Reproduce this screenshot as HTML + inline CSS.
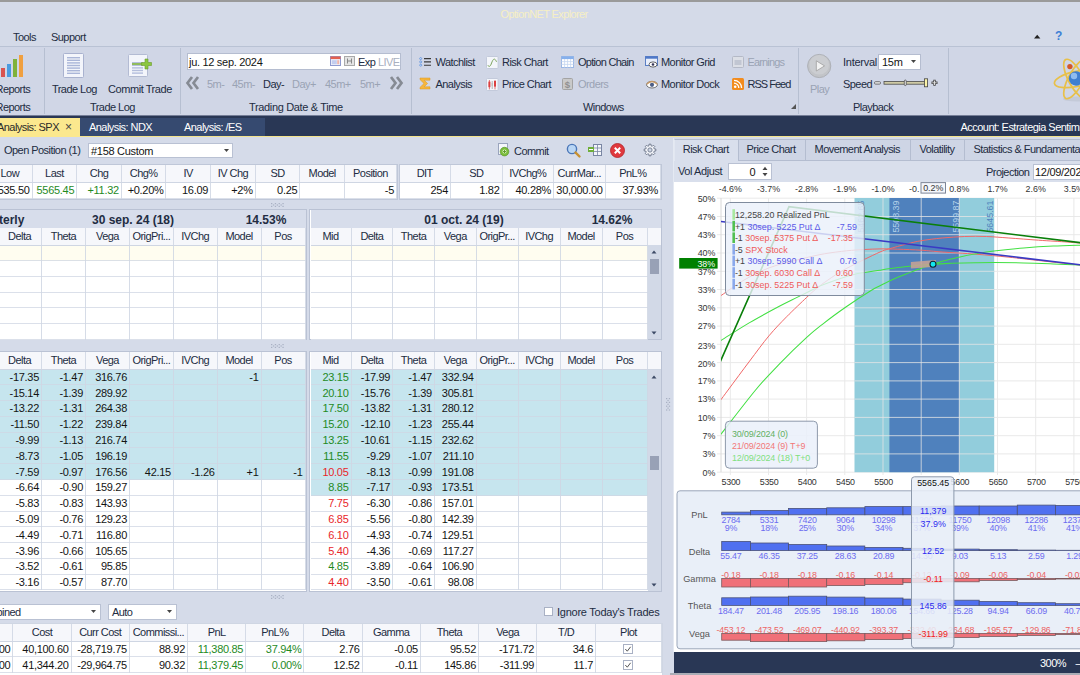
<!DOCTYPE html><html><head><meta charset="utf-8"><title>OptionNET Explorer</title><style>
html,body{margin:0;padding:0;}
body{width:1080px;height:675px;overflow:hidden;position:relative;background:#d5dbe9;
 font-family:"Liberation Sans",sans-serif;font-size:11px;color:#222c42;letter-spacing:-0.55px;}
div{position:absolute;box-sizing:border-box;white-space:nowrap;}
.t{line-height:14px;height:14px;}
.c{line-height:14px;height:14px;text-align:center;}
.r{line-height:14px;height:14px;text-align:right;}
.n{letter-spacing:-0.3px;color:#141414;}
.n.g{color:#1f8a1f;}.n.rd{color:#e8262a;}
.g{color:#1f8a1f;}
.rd{color:#e8262a;}
.dis{color:#9aa3b4;}
svg{position:absolute;overflow:visible;}
.ch{font-family:"Liberation Sans",sans-serif;font-size:9px;letter-spacing:0;}
</style></head><body>
<div style="left:0px;top:0px;width:1080px;height:46px;background:#d4dae8;"></div>
<div style="left:0px;top:46px;width:1080px;height:70px;background:#d0d6e6;"></div>
<div style="left:0px;top:0px;width:1080px;height:2px;background:#9a9a9a;"></div>
<div class="t" style="left:500.5px;top:7.3px;color:#f6efc4;letter-spacing:-.62px;">OptionNET Explorer</div>
<div class="t" style="left:13px;top:30px;">Tools</div>
<div class="t" style="left:51px;top:30px;">Support</div>
<svg style="left:1034px;top:34px" width="7" height="5"><path d="M0 4.5 L3.2 0.8 L6.4 4.5 Z" fill="#222"/></svg>
<div class="t" style="left:1055px;top:29px;color:#3d7fd6;font-weight:bold;font-size:12px;">?</div>
<div style="left:0px;top:46px;width:1080px;height:1px;background:#b9c2d4;"></div>
<div style="left:44px;top:48px;width:1px;height:66px;background:#b6bfd1;"></div>
<div style="left:180px;top:48px;width:1px;height:66px;background:#b6bfd1;"></div>
<div style="left:411px;top:48px;width:1px;height:66px;background:#b6bfd1;"></div>
<div style="left:798.3px;top:48px;width:1px;height:66px;background:#b6bfd1;"></div>
<div style="left:948px;top:48px;width:1px;height:66px;background:#b6bfd1;"></div>
<div class="t" style="left:-4.5px;top:100px;">Reports</div>
<div class="t" style="left:90px;top:100px;">Trade Log</div>
<div class="t" style="left:249px;top:100px;letter-spacing:-.35px;">Trading Date &amp; Time</div>
<div class="t" style="left:583px;top:100px;">Windows</div>
<div class="t" style="left:853px;top:100px;">Playback</div>
<div class="t" style="left:-4.5px;top:82px;">Reports</div>
<svg style="left:0;top:54px" width="26" height="24"><rect x="1" y="14" width="4" height="9" fill="#d9534f"/><rect x="7" y="10" width="4" height="13" fill="#4a9be0"/><rect x="13" y="5" width="4" height="18" fill="#7fb23a"/><rect x="19" y="1" width="4" height="22" fill="#f0a040"/></svg>
<svg style="left:63px;top:53px" width="22" height="26"><rect x="0.5" y="0.5" width="20" height="24" rx="1" fill="#f3f5fb" stroke="#a9b2cf"/><rect x="4" y="4.0" width="13" height="1.4" fill="#aab6d8"/><rect x="4" y="6.6" width="13" height="1.4" fill="#aab6d8"/><rect x="4" y="9.2" width="13" height="1.4" fill="#aab6d8"/><rect x="4" y="11.8" width="13" height="1.4" fill="#aab6d8"/><rect x="4" y="14.4" width="13" height="1.4" fill="#aab6d8"/><rect x="4" y="17.0" width="13" height="1.4" fill="#aab6d8"/><rect x="4" y="19.6" width="13" height="1.4" fill="#aab6d8"/></svg>
<div class="t" style="left:52px;top:82px;">Trade Log</div>
<svg style="left:128px;top:54px" width="26" height="24"><rect x="0.5" y="0.5" width="19" height="22" rx="1" fill="#f3f5fb" stroke="#b3bbd3"/><rect x="4" y="8.0" width="11" height="1.4" fill="#b4bedc"/><rect x="4" y="10.6" width="11" height="1.4" fill="#b4bedc"/><rect x="4" y="13.2" width="11" height="1.4" fill="#b4bedc"/><rect x="4" y="15.8" width="11" height="1.4" fill="#b4bedc"/><rect x="4" y="18.4" width="11" height="1.4" fill="#b4bedc"/><rect x="4" y="9.2" width="10" height="1.6" fill="#7fb23a"/><path d="M13.5 8.5h3.5v-3.5h3v3.5h3.5v3h-3.5v3.5h-3v-3.5h-3.5z" fill="#8cc63f" stroke="#6a9a2a" stroke-width=".6"/></svg>
<div class="t" style="left:108px;top:82px;letter-spacing:-.43px;">Commit Trade</div>
<div style="left:187px;top:53px;width:214px;height:17px;background:#fff;border:1px solid #b5bdd0;"></div>
<div class="t n" style="left:189px;top:54.5px;">ju. 12 sep. 2024</div>
<svg style="left:330px;top:56px" width="11" height="10"><rect x="0.5" y="0.5" width="10" height="9" fill="#eef1fb" stroke="#8f9ad0"/><rect x="0.5" y="0.5" width="10" height="2.6" fill="#e4604f"/><rect x="1.8" y="4.2" width="5" height="4" fill="#c3cdee"/><rect x="7.2" y="4.2" width="2" height="4" fill="#f0b4a8"/></svg>
<svg style="left:344px;top:56px" width="11" height="10"><rect x="0.5" y="0.5" width="10" height="9" fill="#e4e4e4" stroke="#aaa"/><path d="M3.5 2.5v5M7.5 2.5v5M3.5 5h4" stroke="#888" fill="none"/></svg>
<div class="t" style="left:358px;top:54.5px;">Exp</div>
<div class="t" style="left:378px;top:54.5px;color:#a9b0bf;">LIVE</div>
<svg style="left:186px;top:76px" width="14" height="14"><path d="M6 1 L1.5 7 L6 13 M12 1 L7.5 7 L12 13" fill="none" stroke="#868b94" stroke-width="2.7"/></svg>
<svg style="left:389.2px;top:75.6px" width="14" height="14"><path d="M2 1 L6.5 7 L2 13 M8 1 L12.5 7 L8 13" fill="none" stroke="#868b94" stroke-width="2.7"/></svg>
<div class="t dis" style="left:207px;top:76.5px;">5m-</div>
<div class="t dis" style="left:232px;top:76.5px;">45m-</div>
<div class="t" style="left:263px;top:76.5px;">Day-</div>
<div class="t dis" style="left:292px;top:76.5px;">Day+</div>
<div class="t dis" style="left:325px;top:76.5px;">45m+</div>
<div class="t dis" style="left:360px;top:76.5px;">5m+</div>
<div class="t" style="left:435.5px;top:55px;">Watchlist</div>
<div class="t" style="left:435.5px;top:77px;">Analysis</div>
<div class="t" style="left:502px;top:55px;">Risk Chart</div>
<div class="t" style="left:502px;top:77px;">Price Chart</div>
<div class="t" style="left:578px;top:55px;letter-spacing:-.72px;">Option Chain</div>
<div class="t dis" style="left:578px;top:77px;">Orders</div>
<div class="t" style="left:661px;top:55px;">Monitor Grid</div>
<div class="t" style="left:661px;top:77px;">Monitor Dock</div>
<div class="t dis" style="left:747.5px;top:55px;letter-spacing:-.85px;">Earnings</div>
<div class="t" style="left:747.5px;top:77px;letter-spacing:-1px;">RSS Feed</div>
<svg style="left:419px;top:56px" width="13" height="12"><g stroke="#3a3a3a" stroke-width="1.1"><path d="M5 2.6h7M5 5.9h7M5 9.2h7"/></g><g fill="#dbe8fb" stroke="#4a84d8" stroke-width=".7"><circle cx="1.7" cy="2.6" r="1"/><circle cx="1.7" cy="5.9" r="1"/><circle cx="1.7" cy="9.2" r="1"/></g></svg>
<svg style="left:419px;top:77px" width="13" height="13"><path d="M1 1h10v2.2H5.2L8.6 6.5 5.2 9.8H11V12H1v-1.6L5 6.5 1 2.6z" fill="#f6b63c" stroke="#d99420" stroke-width=".5"/></svg>
<svg style="left:486px;top:56px" width="13" height="13"><rect x=".5" y=".5" width="11.6" height="12" rx="1" fill="#f4f6fb" stroke="#c3cadb"/><path d="M1.8 9.2 C3 11.2 4.2 10.6 5.2 8 S7.2 2.6 8.6 3.2 S10 5.4 10.8 6" fill="none" stroke="#7aa35a" stroke-width="1"/></svg>
<svg style="left:486px;top:78px" width="13" height="13"><rect x=".5" y=".5" width="11.6" height="12" rx="1" fill="#f4f6fb" stroke="#c3cadb"/><path d="M3.4 2v9.4M9 2v9.4" stroke="#e05050" stroke-width=".8"/><path d="M6.2 3v8" stroke="#999" stroke-width=".7"/><rect x="2.4" y="3.6" width="2" height="5.6" fill="#dc4040"/><rect x="8" y="3" width="2" height="5.6" fill="#dc4040"/><rect x="5.6" y="5" width="1.2" height="3" fill="#bbb"/></svg>
<svg style="left:561px;top:56px" width="13" height="12"><rect x=".5" y=".5" width="12" height="11" fill="#fff" stroke="#9db8e4"/><rect x=".5" y=".5" width="12" height="2.6" fill="#86b0ec"/><path d="M.5 5.6h12M.5 8.4h12M3.6 3v8.5M6.6 3v8.5M9.6 3v8.5" stroke="#c4d5f0" stroke-width=".8"/></svg>
<svg style="left:562px;top:78px" width="11" height="12"><rect x=".5" y=".5" width="10" height="11" rx="1" fill="#c9c9c9" stroke="#a3a3a3"/><text x="5.5" y="9.6" font-size="9.5" font-weight="bold" text-anchor="middle" fill="#909090" font-family="Liberation Sans, sans-serif" style="letter-spacing:0">$</text></svg>
<svg style="left:645px;top:56px" width="13" height="12"><rect x=".5" y=".5" width="12" height="9" fill="#e8eefb" stroke="#5b7fc4"/><rect x=".5" y=".5" width="12" height="2.2" fill="#4f78c8"/><ellipse cx="8" cy="8.5" rx="4" ry="2.6" fill="#fff" stroke="#444" stroke-width=".8"/><circle cx="8" cy="8.5" r="1.3" fill="#335"/></svg>
<svg style="left:646px;top:80px" width="13" height="9"><ellipse cx="6" cy="4.7" rx="5.5" ry="3.3" fill="#fff" stroke="#666" stroke-width=".9"/><path d="M0.6 4.2 Q6 -1.2 11.4 4.2" fill="none" stroke="#c69a68" stroke-width="1.3"/><circle cx="6" cy="4.8" r="2.1" fill="#4d5f86"/></svg>
<svg style="left:732px;top:56px" width="12" height="12"><rect x=".5" y=".5" width="11" height="11" rx="1" fill="#dcdfe6" stroke="#b4b9c6"/><rect x="2.5" y="4" width="7" height="5" fill="#c1c6d2"/></svg>
<svg style="left:732px;top:78px" width="12" height="12"><rect width="12" height="12" rx="1.5" fill="#f28c1e"/><circle cx="3.2" cy="8.8" r="1.3" fill="#fff"/><path d="M2 5.2a4.8 4.8 0 0 1 4.8 4.8M2 2.4a7.6 7.6 0 0 1 7.6 7.6" fill="none" stroke="#fff" stroke-width="1.3"/></svg>
<svg style="left:791px;top:104px" width="5" height="5"><path d="M5 0V5H0Z" fill="#555"/></svg>
<svg style="left:806.5px;top:54px" width="25" height="25"><circle cx="12.2" cy="12" r="11.6" fill="#c2c4c8" stroke="#aeb1b7"/><circle cx="12.2" cy="10.8" r="9.8" fill="#cbcdd1"/><path d="M9.3 6.8v10.2l8.3-5.1z" fill="#f2f2f2" stroke="#a5a5a5" stroke-width=".9"/></svg>
<div class="t dis" style="left:810px;top:82px;">Play</div>
<div class="t" style="left:843px;top:55px;letter-spacing:-.27px;">Interval</div>
<div style="left:878px;top:54px;width:43px;height:16px;background:#fff;border:1px solid #b5bdd0;"></div>
<div class="t n" style="left:882px;top:55px;">15m</div>
<svg style="left:911px;top:60px" width="6" height="4"><path d="M0 0h5L2.5 3z" fill="#444"/></svg>
<div class="t" style="left:843px;top:76.5px;">Speed</div>
<svg style="left:874px;top:77px" width="66" height="12"><rect x=".5" y="4.7" width="6" height="2.4" rx="1" fill="#e8e8e8" stroke="#555" stroke-width=".8"/><rect x="10" y="4.4" width="42" height="2.8" fill="#cfcba6" stroke="#4a4a4a" stroke-width=".8"/><rect x="30.3" y="3" width="2" height="5.6" rx="1" fill="#ddd" stroke="#4a4a4a" stroke-width=".7"/><rect x="50.4" y="1.8" width="3.2" height="8" fill="#fbf3a8" stroke="#444" stroke-width=".8"/><path d="M57.5 5.8h6M60.5 2.8v6" stroke="#444" stroke-width="2.4"/><path d="M58.3 5.8h4.4M60.5 3.6v4.4" stroke="#e8e8e8" stroke-width=".9"/></svg>
<svg style="left:1050px;top:52px" width="30" height="54" viewBox="1050 52 30 54"><ellipse cx="1077" cy="99" rx="14" ry="2.5" fill="#c4cad8"/><g fill="none" stroke="#e8c04a" stroke-width="1.7"><ellipse cx="1076" cy="79" rx="22" ry="7.5" transform="rotate(-62 1076 79)"/><ellipse cx="1076" cy="79" rx="22" ry="7.5" transform="rotate(62 1076 79)"/><ellipse cx="1076" cy="79" rx="22" ry="7.5" transform="rotate(-12 1076 79)"/></g><circle cx="1076" cy="78.5" r="7.2" fill="#3f7fd0"/><circle cx="1074" cy="76" r="3.2" fill="#8fbcf0"/><circle cx="1069.9" cy="66.6" r="2.7" fill="#d4572a"/></svg>
<div style="left:0px;top:115px;width:1080px;height:1px;background:#293755;opacity:.55;"></div>
<div style="left:0px;top:116px;width:1080px;height:20.2px;background:#293755;"></div>
<div style="left:0px;top:136px;width:1080px;height:1.3px;background:#f3e38c;"></div>
<div style="left:0px;top:117.8px;width:80px;height:19px;background:#fbe88e;"></div>
<div class="t" style="left:-3px;top:120.2px;color:#2a2a2a;">Analysis: SPX</div>
<div class="t" style="left:65px;top:120px;color:#444;font-size:12px;">×</div>
<div style="left:80px;top:117.8px;width:185px;height:18.2px;background:#364a70;"></div>
<div class="t" style="left:89px;top:120.2px;color:#fff;">Analysis: NDX</div>
<div class="t" style="left:184px;top:120.2px;color:#fff;">Analysis: /ES</div>
<div class="t" style="left:960.5px;top:119.5px;color:#fff;letter-spacing:-.53px;">Account: Estrategia Sentimiento</div>
<div class="t" style="left:4px;top:143px;">Open Position (1)</div>
<div style="left:88px;top:143px;width:145px;height:15px;background:#fff;border:1px solid #b9c1d3;"></div>
<div class="t n" style="left:91px;top:143.5px;">#158 Custom</div>
<svg style="left:224px;top:149px" width="6" height="4"><path d="M0 0h5L2.5 3z" fill="#444"/></svg>
<svg style="left:498px;top:143px" width="13" height="14"><rect x=".5" y=".5" width="9" height="11" fill="#f5f7fb" stroke="#9aa4bd"/><circle cx="6.5" cy="8.6" r="4.3" fill="#7cbf3c" stroke="#5a962a" stroke-width=".7"/><circle cx="6.5" cy="8.6" r="2" fill="#d8efc0"/><path d="M5 8.6h3M6.5 7.1v3" stroke="#5a962a" stroke-width="1"/></svg>
<div class="t" style="left:514px;top:144px;">Commit</div>
<svg style="left:566px;top:143px" width="15" height="15"><circle cx="6" cy="6" r="4.6" fill="#b9d6f5" stroke="#4a76b8" stroke-width="1.4"/><path d="M9.5 9.5l4 4" stroke="#c89030" stroke-width="2.4" stroke-linecap="round"/></svg>
<svg style="left:588px;top:144px" width="14" height="12"><rect x="5.5" y=".5" width="8" height="11" fill="#f4f6fa" stroke="#7a86a3"/><path d="M5.5 4h8M5.5 7.5h8M9.5 .5v11" stroke="#7a86a3" stroke-width=".8"/><rect x="0" y="3" width="6" height="5" fill="#6fae3a"/><path d="M1 5.5h4" stroke="#fff"/></svg>
<svg style="left:610px;top:143px" width="15" height="15"><circle cx="7.5" cy="7.5" r="7" fill="#e0393e" stroke="#b32226" stroke-width=".8"/><path d="M4.8 4.8l5.4 5.4M10.2 4.8l-5.4 5.4" stroke="#fff" stroke-width="2"/></svg>
<svg style="left:643.3px;top:143px" width="14" height="14"><path d="M12.81 5.99 L12.81 8.01 L11.28 8.03 L10.75 9.30 L11.83 10.39 L10.39 11.83 L9.30 10.75 L8.03 11.28 L8.01 12.81 L5.99 12.81 L5.97 11.28 L4.70 10.75 L3.61 11.83 L2.17 10.39 L3.25 9.30 L2.72 8.03 L1.19 8.01 L1.19 5.99 L2.72 5.97 L3.25 4.70 L2.17 3.61 L3.61 2.17 L4.70 3.25 L5.97 2.72 L5.99 1.19 L8.01 1.19 L8.03 2.72 L9.30 3.25 L10.39 2.17 L11.83 3.61 L10.75 4.70 L11.28 5.97Z" fill="#f2f4f9" stroke="#727b8e" stroke-width="1" stroke-linejoin="round"/><circle cx="7" cy="7" r="2.1" fill="#cfd6e4" stroke="#727b8e" stroke-width=".9"/></svg>
<div style="left:0px;top:163.5px;width:397.5px;height:36px;border:1px solid #bfc7d8;border-left:none;background:#fff;"></div>
<div style="left:0px;top:164.5px;width:397px;height:34px;background:#fff;"></div>
<div style="left:0px;top:164.5px;width:397px;height:18px;background:#f6f7fb;border-bottom:1px solid #cfd6e3;"></div>
<div style="left:0px;top:197.5px;width:397px;height:1px;background:#cfd6e3;opacity:.75;"></div>
<div style="left:31.62px;top:164.5px;width:1px;height:34px;background:#cfd6e3;opacity:.85;"></div>
<div style="left:76.24px;top:164.5px;width:1px;height:34px;background:#cfd6e3;opacity:.85;"></div>
<div style="left:120.86px;top:164.5px;width:1px;height:34px;background:#cfd6e3;opacity:.85;"></div>
<div style="left:165.48px;top:164.5px;width:1px;height:34px;background:#cfd6e3;opacity:.85;"></div>
<div style="left:210.1px;top:164.5px;width:1px;height:34px;background:#cfd6e3;opacity:.85;"></div>
<div style="left:254.72px;top:164.5px;width:1px;height:34px;background:#cfd6e3;opacity:.85;"></div>
<div style="left:299.34px;top:164.5px;width:1px;height:34px;background:#cfd6e3;opacity:.85;"></div>
<div style="left:343.96px;top:164.5px;width:1px;height:34px;background:#cfd6e3;opacity:.85;"></div>
<div style="left:396px;top:164.5px;width:1px;height:34px;background:#cfd6e3;opacity:.85;"></div>
<div class="c" style="left:-12.0px;top:166.0px;width:43.6px;">Low</div>
<div class="c" style="left:32.62px;top:166.0px;width:43.6px;">Last</div>
<div class="c" style="left:77.24px;top:166.0px;width:43.6px;">Chg</div>
<div class="c" style="left:121.85999999999999px;top:166.0px;width:43.6px;">Chg%</div>
<div class="c" style="left:166.48px;top:166.0px;width:43.6px;">IV</div>
<div class="c" style="left:211.1px;top:166.0px;width:43.6px;">IV Chg</div>
<div class="c" style="left:255.71999999999997px;top:166.0px;width:43.6px;">SD</div>
<div class="c" style="left:300.34px;top:166.0px;width:43.6px;">Model</div>
<div class="c" style="left:344.96px;top:166.0px;width:51.0px;">Position</div>
<div class="r n" style="left:-12.0px;top:183.0px;width:41.6px;">5535.50</div>
<div class="r n g" style="left:32.62px;top:183.0px;width:41.6px;">5565.45</div>
<div class="r n g" style="left:77.24px;top:183.0px;width:41.6px;">+11.32</div>
<div class="r n" style="left:121.85999999999999px;top:183.0px;width:41.6px;">+0.20%</div>
<div class="r n" style="left:166.48px;top:183.0px;width:41.6px;">16.09</div>
<div class="r n" style="left:211.1px;top:183.0px;width:41.6px;">+2%</div>
<div class="r n" style="left:255.71999999999997px;top:183.0px;width:41.6px;">0.25</div>
<div class="r n" style="left:344.96px;top:183.0px;width:49.0px;">-5</div>
<div style="left:399px;top:163.5px;width:263px;height:36px;border:1px solid #bfc7d8;background:#fff;"></div>
<div style="left:399.5px;top:164.5px;width:261.5px;height:34px;background:#fff;"></div>
<div style="left:399.5px;top:164.5px;width:261.5px;height:18px;background:#f6f7fb;border-bottom:1px solid #cfd6e3;"></div>
<div style="left:399.5px;top:197.5px;width:261.5px;height:1px;background:#cfd6e3;opacity:.75;"></div>
<div style="left:450px;top:164.5px;width:1px;height:34px;background:#cfd6e3;opacity:.85;"></div>
<div style="left:501.5px;top:164.5px;width:1px;height:34px;background:#cfd6e3;opacity:.85;"></div>
<div style="left:553px;top:164.5px;width:1px;height:34px;background:#cfd6e3;opacity:.85;"></div>
<div style="left:604.6px;top:164.5px;width:1px;height:34px;background:#cfd6e3;opacity:.85;"></div>
<div style="left:660px;top:164.5px;width:1px;height:34px;background:#cfd6e3;opacity:.85;"></div>
<div class="c" style="left:399.5px;top:166.0px;width:50.5px;">DIT</div>
<div class="c" style="left:451px;top:166.0px;width:50.5px;">SD</div>
<div class="c" style="left:502.5px;top:166.0px;width:50.5px;">IVChg%</div>
<div class="c" style="left:554px;top:166.0px;width:50.6px;">CurrMar...</div>
<div class="c" style="left:605.6px;top:166.0px;width:54.4px;">PnL%</div>
<div class="r n" style="left:399.5px;top:183.0px;width:48.5px;">254</div>
<div class="r n" style="left:451px;top:183.0px;width:48.5px;">1.82</div>
<div class="r n" style="left:502.5px;top:183.0px;width:48.5px;">40.28%</div>
<div class="r n" style="left:554px;top:183.0px;width:48.6px;">30,000.00</div>
<div class="r n" style="left:605.6px;top:183.0px;width:52.4px;">37.93%</div>
<svg style="left:271px;top:202.5px" width="14" height="14"><rect x="0.0" y="0.0" width="1.3" height="1.2" fill="#a9b1c4"/><rect x="0.0" y="2.8" width="1.3" height="1.2" fill="#a9b1c4"/><rect x="1.9" y="1.4" width="1.3" height="1.2" fill="#a9b1c4"/><rect x="3.8" y="0.0" width="1.3" height="1.2" fill="#a9b1c4"/><rect x="3.8" y="2.8" width="1.3" height="1.2" fill="#a9b1c4"/><rect x="5.7" y="1.4" width="1.3" height="1.2" fill="#a9b1c4"/><rect x="7.6" y="0.0" width="1.3" height="1.2" fill="#a9b1c4"/><rect x="7.6" y="2.8" width="1.3" height="1.2" fill="#a9b1c4"/><rect x="9.5" y="1.4" width="1.3" height="1.2" fill="#a9b1c4"/><rect x="11.4" y="0.0" width="1.3" height="1.2" fill="#a9b1c4"/><rect x="11.4" y="2.8" width="1.3" height="1.2" fill="#a9b1c4"/></svg>
<svg style="left:271px;top:343.5px" width="14" height="14"><rect x="0.0" y="0.0" width="1.3" height="1.2" fill="#a9b1c4"/><rect x="0.0" y="2.8" width="1.3" height="1.2" fill="#a9b1c4"/><rect x="1.9" y="1.4" width="1.3" height="1.2" fill="#a9b1c4"/><rect x="3.8" y="0.0" width="1.3" height="1.2" fill="#a9b1c4"/><rect x="3.8" y="2.8" width="1.3" height="1.2" fill="#a9b1c4"/><rect x="5.7" y="1.4" width="1.3" height="1.2" fill="#a9b1c4"/><rect x="7.6" y="0.0" width="1.3" height="1.2" fill="#a9b1c4"/><rect x="7.6" y="2.8" width="1.3" height="1.2" fill="#a9b1c4"/><rect x="9.5" y="1.4" width="1.3" height="1.2" fill="#a9b1c4"/><rect x="11.4" y="0.0" width="1.3" height="1.2" fill="#a9b1c4"/><rect x="11.4" y="2.8" width="1.3" height="1.2" fill="#a9b1c4"/></svg>
<svg style="left:271px;top:595px" width="14" height="14"><rect x="0.0" y="0.0" width="1.3" height="1.2" fill="#a9b1c4"/><rect x="0.0" y="2.8" width="1.3" height="1.2" fill="#a9b1c4"/><rect x="1.9" y="1.4" width="1.3" height="1.2" fill="#a9b1c4"/><rect x="3.8" y="0.0" width="1.3" height="1.2" fill="#a9b1c4"/><rect x="3.8" y="2.8" width="1.3" height="1.2" fill="#a9b1c4"/><rect x="5.7" y="1.4" width="1.3" height="1.2" fill="#a9b1c4"/><rect x="7.6" y="0.0" width="1.3" height="1.2" fill="#a9b1c4"/><rect x="7.6" y="2.8" width="1.3" height="1.2" fill="#a9b1c4"/><rect x="9.5" y="1.4" width="1.3" height="1.2" fill="#a9b1c4"/><rect x="11.4" y="0.0" width="1.3" height="1.2" fill="#a9b1c4"/><rect x="11.4" y="2.8" width="1.3" height="1.2" fill="#a9b1c4"/></svg>
<svg style="left:665.5px;top:398px" width="14" height="14"><rect x="0.0" y="0.0" width="1.3" height="1.2" fill="#a9b1c4"/><rect x="2.8" y="0.0" width="1.3" height="1.2" fill="#a9b1c4"/><rect x="1.4" y="1.9" width="1.3" height="1.2" fill="#a9b1c4"/><rect x="0.0" y="3.8" width="1.3" height="1.2" fill="#a9b1c4"/><rect x="2.8" y="3.8" width="1.3" height="1.2" fill="#a9b1c4"/><rect x="1.4" y="5.7" width="1.3" height="1.2" fill="#a9b1c4"/><rect x="0.0" y="7.6" width="1.3" height="1.2" fill="#a9b1c4"/><rect x="2.8" y="7.6" width="1.3" height="1.2" fill="#a9b1c4"/><rect x="1.4" y="9.5" width="1.3" height="1.2" fill="#a9b1c4"/><rect x="0.0" y="11.4" width="1.3" height="1.2" fill="#a9b1c4"/><rect x="2.8" y="11.4" width="1.3" height="1.2" fill="#a9b1c4"/></svg>
<div style="left:0px;top:209px;width:306.5px;height:130.5px;border:1px solid #bac2d4;border-left:none;background:#fff;"></div>
<div style="left:0px;top:210px;width:305.5px;height:18px;background:#d7ddeb;"></div>
<div class="t" style="left:-1px;top:212.5px;font-weight:bold;font-size:12px;letter-spacing:0;">terly</div>
<div class="c" style="left:83px;top:212.5px;width:100px;font-weight:bold;font-size:12px;letter-spacing:0;">30 sep. 24 (18)</div>
<div class="c" style="left:236px;top:212.5px;width:60px;font-weight:bold;font-size:12px;letter-spacing:0;">14.53%</div>
<div style="left:0px;top:228px;width:305.5px;height:111.5px;background:#fff;"></div>
<div style="left:0px;top:228px;width:305.5px;height:17.6px;background:#f6f7fb;border-bottom:1px solid #cfd6e3;"></div>
<div style="left:0px;top:245.6px;width:305.5px;height:15.65px;background:#fffdf0;"></div>
<div style="left:0px;top:260.25px;width:305.5px;height:1px;background:#cfd6e3;opacity:.75;"></div>
<div style="left:0px;top:275.9px;width:305.5px;height:1px;background:#cfd6e3;opacity:.75;"></div>
<div style="left:0px;top:291.55px;width:305.5px;height:1px;background:#cfd6e3;opacity:.75;"></div>
<div style="left:0px;top:307.2px;width:305.5px;height:1px;background:#cfd6e3;opacity:.75;"></div>
<div style="left:0px;top:322.85px;width:305.5px;height:1px;background:#cfd6e3;opacity:.75;"></div>
<div style="left:0px;top:338.5px;width:305.5px;height:1px;background:#cfd6e3;opacity:.75;"></div>
<div style="left:41.0px;top:228px;width:1px;height:111.5px;background:#cfd6e3;opacity:.85;"></div>
<div style="left:85.0px;top:228px;width:1px;height:111.5px;background:#cfd6e3;opacity:.85;"></div>
<div style="left:129.0px;top:228px;width:1px;height:111.5px;background:#cfd6e3;opacity:.85;"></div>
<div style="left:172.9px;top:228px;width:1px;height:111.5px;background:#cfd6e3;opacity:.85;"></div>
<div style="left:216.6px;top:228px;width:1px;height:111.5px;background:#cfd6e3;opacity:.85;"></div>
<div style="left:260.5px;top:228px;width:1px;height:111.5px;background:#cfd6e3;opacity:.85;"></div>
<div style="left:304.5px;top:228px;width:1px;height:111.5px;background:#cfd6e3;opacity:.85;"></div>
<div class="c" style="left:-2.0px;top:229.3px;width:43.0px;">Delta</div>
<div class="c" style="left:42.0px;top:229.3px;width:43.0px;">Theta</div>
<div class="c" style="left:86.0px;top:229.3px;width:43.0px;">Vega</div>
<div class="c" style="left:130.0px;top:229.3px;width:42.9px;">OrigPri...</div>
<div class="c" style="left:173.9px;top:229.3px;width:42.7px;">IVChg</div>
<div class="c" style="left:217.6px;top:229.3px;width:42.9px;">Model</div>
<div class="c" style="left:261.5px;top:229.3px;width:43.0px;">Pos</div>
<div style="left:309px;top:209px;width:353px;height:130.5px;border:1px solid #bac2d4;background:#fff;"></div>
<div style="left:310.5px;top:210px;width:350.5px;height:18px;background:#d7ddeb;"></div>
<div class="c" style="left:414px;top:212.5px;width:100px;font-weight:bold;font-size:12px;letter-spacing:0;">01 oct. 24 (19)</div>
<div class="c" style="left:582px;top:212.5px;width:60px;font-weight:bold;font-size:12px;letter-spacing:0;">14.62%</div>
<div style="left:310.5px;top:228px;width:337.0px;height:111.5px;background:#fff;"></div>
<div style="left:310.5px;top:228px;width:337.0px;height:17.6px;background:#f6f7fb;border-bottom:1px solid #cfd6e3;"></div>
<div style="left:310.5px;top:245.6px;width:337.0px;height:15.65px;background:#fffdf0;"></div>
<div style="left:310.5px;top:260.25px;width:337.0px;height:1px;background:#cfd6e3;opacity:.75;"></div>
<div style="left:310.5px;top:275.9px;width:337.0px;height:1px;background:#cfd6e3;opacity:.75;"></div>
<div style="left:310.5px;top:291.55px;width:337.0px;height:1px;background:#cfd6e3;opacity:.75;"></div>
<div style="left:310.5px;top:307.2px;width:337.0px;height:1px;background:#cfd6e3;opacity:.75;"></div>
<div style="left:310.5px;top:322.85px;width:337.0px;height:1px;background:#cfd6e3;opacity:.75;"></div>
<div style="left:310.5px;top:338.5px;width:337.0px;height:1px;background:#cfd6e3;opacity:.75;"></div>
<div style="left:350.5px;top:228px;width:1px;height:111.5px;background:#cfd6e3;opacity:.85;"></div>
<div style="left:392.2px;top:228px;width:1px;height:111.5px;background:#cfd6e3;opacity:.85;"></div>
<div style="left:433.9px;top:228px;width:1px;height:111.5px;background:#cfd6e3;opacity:.85;"></div>
<div style="left:475.7px;top:228px;width:1px;height:111.5px;background:#cfd6e3;opacity:.85;"></div>
<div style="left:517.7px;top:228px;width:1px;height:111.5px;background:#cfd6e3;opacity:.85;"></div>
<div style="left:559.5px;top:228px;width:1px;height:111.5px;background:#cfd6e3;opacity:.85;"></div>
<div style="left:601.5px;top:228px;width:1px;height:111.5px;background:#cfd6e3;opacity:.85;"></div>
<div style="left:646.5px;top:228px;width:1px;height:111.5px;background:#cfd6e3;opacity:.85;"></div>
<div class="c" style="left:310.5px;top:229.3px;width:40.0px;">Mid</div>
<div class="c" style="left:351.5px;top:229.3px;width:40.7px;">Delta</div>
<div class="c" style="left:393.2px;top:229.3px;width:40.7px;">Theta</div>
<div class="c" style="left:434.9px;top:229.3px;width:40.8px;">Vega</div>
<div class="c" style="left:476.7px;top:229.3px;width:41.0px;">OrigPr...</div>
<div class="c" style="left:518.7px;top:229.3px;width:40.8px;">IVChg</div>
<div class="c" style="left:560.5px;top:229.3px;width:41.0px;">Model</div>
<div class="c" style="left:602.5px;top:229.3px;width:44.0px;">Pos</div>
<div style="left:647.5px;top:228px;width:13.5px;height:17.6px;background:#f6f7fb;border-bottom:1px solid #cfd6e3;"></div>
<div style="left:647.5px;top:245px;width:13.5px;height:94px;background:#d2d9e7;"></div>
<svg style="left:651.0px;top:250px" width="7" height="4"><path d="M0.5 3.6h5L3 0.4z" fill="#3c4a66"/></svg>
<svg style="left:651.0px;top:331px" width="7" height="4"><path d="M0.5 0.4h5L3 3.6z" fill="#3c4a66"/></svg>
<div style="left:649.8px;top:259px;width:9px;height:15px;background:#98a1b6;"></div>
<div style="left:0px;top:350.5px;width:306.5px;height:241px;border:1px solid #bac2d4;border-left:none;background:#fff;"></div>
<div style="left:0px;top:351.5px;width:305.5px;height:238.92px;background:#fff;"></div>
<div style="left:0px;top:351.5px;width:305.5px;height:18px;background:#f6f7fb;border-bottom:1px solid #cfd6e3;"></div>
<div style="left:0px;top:369.5px;width:305.5px;height:15.78px;background:#c6e5ee;"></div>
<div style="left:0px;top:385.28px;width:305.5px;height:15.78px;background:#c6e5ee;"></div>
<div style="left:0px;top:401.06px;width:305.5px;height:15.78px;background:#c6e5ee;"></div>
<div style="left:0px;top:416.84px;width:305.5px;height:15.78px;background:#c6e5ee;"></div>
<div style="left:0px;top:432.62px;width:305.5px;height:15.78px;background:#c6e5ee;"></div>
<div style="left:0px;top:448.4px;width:305.5px;height:15.78px;background:#c6e5ee;"></div>
<div style="left:0px;top:464.18px;width:305.5px;height:15.78px;background:#c6e5ee;"></div>
<div style="left:0px;top:384.28px;width:305.5px;height:1px;background:#cfd6e3;opacity:.75;"></div>
<div style="left:0px;top:400.06px;width:305.5px;height:1px;background:#cfd6e3;opacity:.75;"></div>
<div style="left:0px;top:415.84px;width:305.5px;height:1px;background:#cfd6e3;opacity:.75;"></div>
<div style="left:0px;top:431.62px;width:305.5px;height:1px;background:#cfd6e3;opacity:.75;"></div>
<div style="left:0px;top:447.4px;width:305.5px;height:1px;background:#cfd6e3;opacity:.75;"></div>
<div style="left:0px;top:463.18px;width:305.5px;height:1px;background:#cfd6e3;opacity:.75;"></div>
<div style="left:0px;top:478.96px;width:305.5px;height:1px;background:#cfd6e3;opacity:.75;"></div>
<div style="left:0px;top:494.74px;width:305.5px;height:1px;background:#cfd6e3;opacity:.75;"></div>
<div style="left:0px;top:510.52px;width:305.5px;height:1px;background:#cfd6e3;opacity:.75;"></div>
<div style="left:0px;top:526.3px;width:305.5px;height:1px;background:#cfd6e3;opacity:.75;"></div>
<div style="left:0px;top:542.08px;width:305.5px;height:1px;background:#cfd6e3;opacity:.75;"></div>
<div style="left:0px;top:557.86px;width:305.5px;height:1px;background:#cfd6e3;opacity:.75;"></div>
<div style="left:0px;top:573.64px;width:305.5px;height:1px;background:#cfd6e3;opacity:.75;"></div>
<div style="left:0px;top:589.42px;width:305.5px;height:1px;background:#cfd6e3;opacity:.75;"></div>
<div style="left:41.0px;top:351.5px;width:1px;height:238.92px;background:#cfd6e3;opacity:.85;"></div>
<div style="left:85.0px;top:351.5px;width:1px;height:238.92px;background:#cfd6e3;opacity:.85;"></div>
<div style="left:129.0px;top:351.5px;width:1px;height:238.92px;background:#cfd6e3;opacity:.85;"></div>
<div style="left:172.9px;top:351.5px;width:1px;height:238.92px;background:#cfd6e3;opacity:.85;"></div>
<div style="left:216.6px;top:351.5px;width:1px;height:238.92px;background:#cfd6e3;opacity:.85;"></div>
<div style="left:260.5px;top:351.5px;width:1px;height:238.92px;background:#cfd6e3;opacity:.85;"></div>
<div style="left:304.5px;top:351.5px;width:1px;height:238.92px;background:#cfd6e3;opacity:.85;"></div>
<div class="c" style="left:-2.0px;top:353.0px;width:43.0px;">Delta</div>
<div class="c" style="left:42.0px;top:353.0px;width:43.0px;">Theta</div>
<div class="c" style="left:86.0px;top:353.0px;width:43.0px;">Vega</div>
<div class="c" style="left:130.0px;top:353.0px;width:42.9px;">OrigPri...</div>
<div class="c" style="left:173.9px;top:353.0px;width:42.7px;">IVChg</div>
<div class="c" style="left:217.6px;top:353.0px;width:42.9px;">Model</div>
<div class="c" style="left:261.5px;top:353.0px;width:43.0px;">Pos</div>
<div class="r n" style="left:-2.0px;top:369.9px;width:41.0px;">-17.35</div>
<div class="r n" style="left:42.0px;top:369.9px;width:41.0px;">-1.47</div>
<div class="r n" style="left:86.0px;top:369.9px;width:41.0px;">316.76</div>
<div class="r n" style="left:217.6px;top:369.9px;width:40.9px;">-1</div>
<div class="r n" style="left:-2.0px;top:385.7px;width:41.0px;">-15.14</div>
<div class="r n" style="left:42.0px;top:385.7px;width:41.0px;">-1.39</div>
<div class="r n" style="left:86.0px;top:385.7px;width:41.0px;">289.92</div>
<div class="r n" style="left:-2.0px;top:401.4px;width:41.0px;">-13.22</div>
<div class="r n" style="left:42.0px;top:401.4px;width:41.0px;">-1.31</div>
<div class="r n" style="left:86.0px;top:401.4px;width:41.0px;">264.38</div>
<div class="r n" style="left:-2.0px;top:417.2px;width:41.0px;">-11.50</div>
<div class="r n" style="left:42.0px;top:417.2px;width:41.0px;">-1.22</div>
<div class="r n" style="left:86.0px;top:417.2px;width:41.0px;">239.84</div>
<div class="r n" style="left:-2.0px;top:433.0px;width:41.0px;">-9.99</div>
<div class="r n" style="left:42.0px;top:433.0px;width:41.0px;">-1.13</div>
<div class="r n" style="left:86.0px;top:433.0px;width:41.0px;">216.74</div>
<div class="r n" style="left:-2.0px;top:448.8px;width:41.0px;">-8.73</div>
<div class="r n" style="left:42.0px;top:448.8px;width:41.0px;">-1.05</div>
<div class="r n" style="left:86.0px;top:448.8px;width:41.0px;">196.19</div>
<div class="r n" style="left:-2.0px;top:464.6px;width:41.0px;">-7.59</div>
<div class="r n" style="left:42.0px;top:464.6px;width:41.0px;">-0.97</div>
<div class="r n" style="left:86.0px;top:464.6px;width:41.0px;">176.56</div>
<div class="r n" style="left:130.0px;top:464.6px;width:40.9px;">42.15</div>
<div class="r n" style="left:173.9px;top:464.6px;width:40.7px;">-1.26</div>
<div class="r n" style="left:217.6px;top:464.6px;width:40.9px;">+1</div>
<div class="r n" style="left:261.5px;top:464.6px;width:41.0px;">-1</div>
<div class="r n" style="left:-2.0px;top:480.3px;width:41.0px;">-6.64</div>
<div class="r n" style="left:42.0px;top:480.3px;width:41.0px;">-0.90</div>
<div class="r n" style="left:86.0px;top:480.3px;width:41.0px;">159.27</div>
<div class="r n" style="left:-2.0px;top:496.1px;width:41.0px;">-5.83</div>
<div class="r n" style="left:42.0px;top:496.1px;width:41.0px;">-0.83</div>
<div class="r n" style="left:86.0px;top:496.1px;width:41.0px;">143.93</div>
<div class="r n" style="left:-2.0px;top:511.9px;width:41.0px;">-5.09</div>
<div class="r n" style="left:42.0px;top:511.9px;width:41.0px;">-0.76</div>
<div class="r n" style="left:86.0px;top:511.9px;width:41.0px;">129.23</div>
<div class="r n" style="left:-2.0px;top:527.7px;width:41.0px;">-4.49</div>
<div class="r n" style="left:42.0px;top:527.7px;width:41.0px;">-0.71</div>
<div class="r n" style="left:86.0px;top:527.7px;width:41.0px;">116.80</div>
<div class="r n" style="left:-2.0px;top:543.5px;width:41.0px;">-3.96</div>
<div class="r n" style="left:42.0px;top:543.5px;width:41.0px;">-0.66</div>
<div class="r n" style="left:86.0px;top:543.5px;width:41.0px;">105.65</div>
<div class="r n" style="left:-2.0px;top:559.2px;width:41.0px;">-3.52</div>
<div class="r n" style="left:42.0px;top:559.2px;width:41.0px;">-0.61</div>
<div class="r n" style="left:86.0px;top:559.2px;width:41.0px;">95.85</div>
<div class="r n" style="left:-2.0px;top:575.0px;width:41.0px;">-3.16</div>
<div class="r n" style="left:42.0px;top:575.0px;width:41.0px;">-0.57</div>
<div class="r n" style="left:86.0px;top:575.0px;width:41.0px;">87.70</div>
<div style="left:309px;top:350.5px;width:353px;height:241px;border:1px solid #bac2d4;background:#fff;"></div>
<div style="left:310.5px;top:351.5px;width:337.0px;height:238.92px;background:#fff;"></div>
<div style="left:310.5px;top:351.5px;width:337.0px;height:18px;background:#f6f7fb;border-bottom:1px solid #cfd6e3;"></div>
<div style="left:310.5px;top:369.5px;width:337.0px;height:15.78px;background:#c6e5ee;"></div>
<div style="left:310.5px;top:385.28px;width:337.0px;height:15.78px;background:#c6e5ee;"></div>
<div style="left:310.5px;top:401.06px;width:337.0px;height:15.78px;background:#c6e5ee;"></div>
<div style="left:310.5px;top:416.84px;width:337.0px;height:15.78px;background:#c6e5ee;"></div>
<div style="left:310.5px;top:432.62px;width:337.0px;height:15.78px;background:#c6e5ee;"></div>
<div style="left:310.5px;top:448.4px;width:337.0px;height:15.78px;background:#c6e5ee;"></div>
<div style="left:310.5px;top:464.18px;width:337.0px;height:15.78px;background:#c6e5ee;"></div>
<div style="left:310.5px;top:479.96px;width:337.0px;height:15.78px;background:#c6e5ee;"></div>
<div style="left:310.5px;top:384.28px;width:337.0px;height:1px;background:#cfd6e3;opacity:.75;"></div>
<div style="left:310.5px;top:400.06px;width:337.0px;height:1px;background:#cfd6e3;opacity:.75;"></div>
<div style="left:310.5px;top:415.84px;width:337.0px;height:1px;background:#cfd6e3;opacity:.75;"></div>
<div style="left:310.5px;top:431.62px;width:337.0px;height:1px;background:#cfd6e3;opacity:.75;"></div>
<div style="left:310.5px;top:447.4px;width:337.0px;height:1px;background:#cfd6e3;opacity:.75;"></div>
<div style="left:310.5px;top:463.18px;width:337.0px;height:1px;background:#cfd6e3;opacity:.75;"></div>
<div style="left:310.5px;top:478.96px;width:337.0px;height:1px;background:#cfd6e3;opacity:.75;"></div>
<div style="left:310.5px;top:494.74px;width:337.0px;height:1px;background:#cfd6e3;opacity:.75;"></div>
<div style="left:310.5px;top:510.52px;width:337.0px;height:1px;background:#cfd6e3;opacity:.75;"></div>
<div style="left:310.5px;top:526.3px;width:337.0px;height:1px;background:#cfd6e3;opacity:.75;"></div>
<div style="left:310.5px;top:542.08px;width:337.0px;height:1px;background:#cfd6e3;opacity:.75;"></div>
<div style="left:310.5px;top:557.86px;width:337.0px;height:1px;background:#cfd6e3;opacity:.75;"></div>
<div style="left:310.5px;top:573.64px;width:337.0px;height:1px;background:#cfd6e3;opacity:.75;"></div>
<div style="left:310.5px;top:589.42px;width:337.0px;height:1px;background:#cfd6e3;opacity:.75;"></div>
<div style="left:350.5px;top:351.5px;width:1px;height:238.92px;background:#cfd6e3;opacity:.85;"></div>
<div style="left:392.2px;top:351.5px;width:1px;height:238.92px;background:#cfd6e3;opacity:.85;"></div>
<div style="left:433.9px;top:351.5px;width:1px;height:238.92px;background:#cfd6e3;opacity:.85;"></div>
<div style="left:475.7px;top:351.5px;width:1px;height:238.92px;background:#cfd6e3;opacity:.85;"></div>
<div style="left:517.7px;top:351.5px;width:1px;height:238.92px;background:#cfd6e3;opacity:.85;"></div>
<div style="left:559.5px;top:351.5px;width:1px;height:238.92px;background:#cfd6e3;opacity:.85;"></div>
<div style="left:601.5px;top:351.5px;width:1px;height:238.92px;background:#cfd6e3;opacity:.85;"></div>
<div style="left:646.5px;top:351.5px;width:1px;height:238.92px;background:#cfd6e3;opacity:.85;"></div>
<div class="c" style="left:310.5px;top:353.0px;width:40.0px;">Mid</div>
<div class="c" style="left:351.5px;top:353.0px;width:40.7px;">Delta</div>
<div class="c" style="left:393.2px;top:353.0px;width:40.7px;">Theta</div>
<div class="c" style="left:434.9px;top:353.0px;width:40.8px;">Vega</div>
<div class="c" style="left:476.7px;top:353.0px;width:41.0px;">OrigPr...</div>
<div class="c" style="left:518.7px;top:353.0px;width:40.8px;">IVChg</div>
<div class="c" style="left:560.5px;top:353.0px;width:41.0px;">Model</div>
<div class="c" style="left:602.5px;top:353.0px;width:44.0px;">Pos</div>
<div class="r n g" style="left:310.5px;top:369.9px;width:38.0px;">23.15</div>
<div class="r n" style="left:351.5px;top:369.9px;width:38.7px;">-17.99</div>
<div class="r n" style="left:393.2px;top:369.9px;width:38.7px;">-1.47</div>
<div class="r n" style="left:434.9px;top:369.9px;width:38.8px;">332.94</div>
<div class="r n g" style="left:310.5px;top:385.7px;width:38.0px;">20.10</div>
<div class="r n" style="left:351.5px;top:385.7px;width:38.7px;">-15.76</div>
<div class="r n" style="left:393.2px;top:385.7px;width:38.7px;">-1.39</div>
<div class="r n" style="left:434.9px;top:385.7px;width:38.8px;">305.81</div>
<div class="r n g" style="left:310.5px;top:401.4px;width:38.0px;">17.50</div>
<div class="r n" style="left:351.5px;top:401.4px;width:38.7px;">-13.82</div>
<div class="r n" style="left:393.2px;top:401.4px;width:38.7px;">-1.31</div>
<div class="r n" style="left:434.9px;top:401.4px;width:38.8px;">280.12</div>
<div class="r n g" style="left:310.5px;top:417.2px;width:38.0px;">15.20</div>
<div class="r n" style="left:351.5px;top:417.2px;width:38.7px;">-12.10</div>
<div class="r n" style="left:393.2px;top:417.2px;width:38.7px;">-1.23</div>
<div class="r n" style="left:434.9px;top:417.2px;width:38.8px;">255.44</div>
<div class="r n g" style="left:310.5px;top:433.0px;width:38.0px;">13.25</div>
<div class="r n" style="left:351.5px;top:433.0px;width:38.7px;">-10.61</div>
<div class="r n" style="left:393.2px;top:433.0px;width:38.7px;">-1.15</div>
<div class="r n" style="left:434.9px;top:433.0px;width:38.8px;">232.62</div>
<div class="r n g" style="left:310.5px;top:448.8px;width:38.0px;">11.55</div>
<div class="r n" style="left:351.5px;top:448.8px;width:38.7px;">-9.29</div>
<div class="r n" style="left:393.2px;top:448.8px;width:38.7px;">-1.07</div>
<div class="r n" style="left:434.9px;top:448.8px;width:38.8px;">211.10</div>
<div class="r n rd" style="left:310.5px;top:464.6px;width:38.0px;">10.05</div>
<div class="r n" style="left:351.5px;top:464.6px;width:38.7px;">-8.13</div>
<div class="r n" style="left:393.2px;top:464.6px;width:38.7px;">-0.99</div>
<div class="r n" style="left:434.9px;top:464.6px;width:38.8px;">191.08</div>
<div class="r n g" style="left:310.5px;top:480.3px;width:38.0px;">8.85</div>
<div class="r n" style="left:351.5px;top:480.3px;width:38.7px;">-7.17</div>
<div class="r n" style="left:393.2px;top:480.3px;width:38.7px;">-0.93</div>
<div class="r n" style="left:434.9px;top:480.3px;width:38.8px;">173.51</div>
<div class="r n rd" style="left:310.5px;top:496.1px;width:38.0px;">7.75</div>
<div class="r n" style="left:351.5px;top:496.1px;width:38.7px;">-6.30</div>
<div class="r n" style="left:393.2px;top:496.1px;width:38.7px;">-0.86</div>
<div class="r n" style="left:434.9px;top:496.1px;width:38.8px;">157.01</div>
<div class="r n rd" style="left:310.5px;top:511.9px;width:38.0px;">6.85</div>
<div class="r n" style="left:351.5px;top:511.9px;width:38.7px;">-5.56</div>
<div class="r n" style="left:393.2px;top:511.9px;width:38.7px;">-0.80</div>
<div class="r n" style="left:434.9px;top:511.9px;width:38.8px;">142.39</div>
<div class="r n rd" style="left:310.5px;top:527.7px;width:38.0px;">6.10</div>
<div class="r n" style="left:351.5px;top:527.7px;width:38.7px;">-4.93</div>
<div class="r n" style="left:393.2px;top:527.7px;width:38.7px;">-0.74</div>
<div class="r n" style="left:434.9px;top:527.7px;width:38.8px;">129.51</div>
<div class="r n rd" style="left:310.5px;top:543.5px;width:38.0px;">5.40</div>
<div class="r n" style="left:351.5px;top:543.5px;width:38.7px;">-4.36</div>
<div class="r n" style="left:393.2px;top:543.5px;width:38.7px;">-0.69</div>
<div class="r n" style="left:434.9px;top:543.5px;width:38.8px;">117.27</div>
<div class="r n g" style="left:310.5px;top:559.2px;width:38.0px;">4.85</div>
<div class="r n" style="left:351.5px;top:559.2px;width:38.7px;">-3.89</div>
<div class="r n" style="left:393.2px;top:559.2px;width:38.7px;">-0.64</div>
<div class="r n" style="left:434.9px;top:559.2px;width:38.8px;">106.90</div>
<div class="r n rd" style="left:310.5px;top:575.0px;width:38.0px;">4.40</div>
<div class="r n" style="left:351.5px;top:575.0px;width:38.7px;">-3.50</div>
<div class="r n" style="left:393.2px;top:575.0px;width:38.7px;">-0.61</div>
<div class="r n" style="left:434.9px;top:575.0px;width:38.8px;">98.08</div>
<div style="left:647.5px;top:351.5px;width:13.5px;height:18px;background:#f6f7fb;border-bottom:1px solid #cfd6e3;"></div>
<div style="left:647.5px;top:369.5px;width:13.5px;height:221px;background:#d2d9e7;"></div>
<svg style="left:651.0px;top:374.5px" width="7" height="4"><path d="M0.5 3.6h5L3 0.4z" fill="#3c4a66"/></svg>
<svg style="left:651.0px;top:582.5px" width="7" height="4"><path d="M0.5 0.4h5L3 3.6z" fill="#3c4a66"/></svg>
<div style="left:649.8px;top:456px;width:9px;height:14px;background:#98a1b6;"></div>
<div style="left:-5px;top:604px;width:105.5px;height:16px;background:#fff;border:1px solid #b9c1d3;"></div>
<div class="t" style="left:-3.5px;top:604.8px;">bined</div>
<svg style="left:91px;top:610px" width="6" height="4"><path d="M0 0h5L2.5 3z" fill="#444"/></svg>
<div style="left:108px;top:604px;width:68.5px;height:16px;background:#fff;border:1px solid #b9c1d3;"></div>
<div class="t" style="left:112px;top:604.8px;">Auto</div>
<svg style="left:167px;top:610px" width="6" height="4"><path d="M0 0h5L2.5 3z" fill="#444"/></svg>
<div style="left:544px;top:606.7px;width:9px;height:9px;background:#fff;border:1px solid #a9b1c4;"></div>
<div class="t" style="left:557px;top:604.5px;letter-spacing:-.25px;">Ignore Today's Trades</div>
<div style="left:0px;top:622.5px;width:663px;height:53px;border:1px solid #cfd6e3;border-left:none;background:#fff;"></div>
<div style="left:0px;top:623.5px;width:662px;height:49.6px;background:#fff;"></div>
<div style="left:0px;top:623.5px;width:662px;height:18px;background:#f6f7fb;border-bottom:1px solid #cfd6e3;"></div>
<div style="left:0px;top:656.3px;width:662px;height:1px;background:#cfd6e3;opacity:.75;"></div>
<div style="left:0px;top:672.1px;width:662px;height:1px;background:#cfd6e3;opacity:.75;"></div>
<div style="left:12.4px;top:623.5px;width:1px;height:49.6px;background:#cfd6e3;opacity:.85;"></div>
<div style="left:70.6px;top:623.5px;width:1px;height:49.6px;background:#cfd6e3;opacity:.85;"></div>
<div style="left:128.8px;top:623.5px;width:1px;height:49.6px;background:#cfd6e3;opacity:.85;"></div>
<div style="left:187.0px;top:623.5px;width:1px;height:49.6px;background:#cfd6e3;opacity:.85;"></div>
<div style="left:245.2px;top:623.5px;width:1px;height:49.6px;background:#cfd6e3;opacity:.85;"></div>
<div style="left:303.4px;top:623.5px;width:1px;height:49.6px;background:#cfd6e3;opacity:.85;"></div>
<div style="left:361.6px;top:623.5px;width:1px;height:49.6px;background:#cfd6e3;opacity:.85;"></div>
<div style="left:419.8px;top:623.5px;width:1px;height:49.6px;background:#cfd6e3;opacity:.85;"></div>
<div style="left:478.0px;top:623.5px;width:1px;height:49.6px;background:#cfd6e3;opacity:.85;"></div>
<div style="left:536.2px;top:623.5px;width:1px;height:49.6px;background:#cfd6e3;opacity:.85;"></div>
<div style="left:595px;top:623.5px;width:1px;height:49.6px;background:#cfd6e3;opacity:.85;"></div>
<div style="left:661px;top:623.5px;width:1px;height:49.6px;background:#cfd6e3;opacity:.85;"></div>
<div class="c" style="left:13.4px;top:625.0px;width:57.2px;">Cost</div>
<div class="c" style="left:71.6px;top:625.0px;width:57.2px;">Curr Cost</div>
<div class="c" style="left:129.8px;top:625.0px;width:57.2px;">Commissi...</div>
<div class="c" style="left:188.0px;top:625.0px;width:57.2px;">PnL</div>
<div class="c" style="left:246.2px;top:625.0px;width:57.2px;">PnL%</div>
<div class="c" style="left:304.4px;top:625.0px;width:57.2px;">Delta</div>
<div class="c" style="left:362.6px;top:625.0px;width:57.2px;">Gamma</div>
<div class="c" style="left:420.8px;top:625.0px;width:57.2px;">Theta</div>
<div class="c" style="left:479.0px;top:625.0px;width:57.2px;">Vega</div>
<div class="c" style="left:537.2px;top:625.0px;width:57.8px;">T/D</div>
<div class="c" style="left:596px;top:625.0px;width:65.0px;">Plot</div>
<div class="r n" style="left:-44.8px;top:641.9px;width:55.2px;">00</div>
<div class="r n" style="left:13.4px;top:641.9px;width:55.2px;">40,100.60</div>
<div class="r n" style="left:71.6px;top:641.9px;width:55.2px;">-28,719.75</div>
<div class="r n" style="left:129.8px;top:641.9px;width:55.2px;">88.92</div>
<div class="r n g" style="left:188.0px;top:641.9px;width:55.2px;">11,380.85</div>
<div class="r n g" style="left:246.2px;top:641.9px;width:55.2px;">37.94%</div>
<div class="r n" style="left:304.4px;top:641.9px;width:55.2px;">2.76</div>
<div class="r n" style="left:362.6px;top:641.9px;width:55.2px;">-0.05</div>
<div class="r n" style="left:420.8px;top:641.9px;width:55.2px;">95.52</div>
<div class="r n" style="left:479.0px;top:641.9px;width:55.2px;">-171.72</div>
<div class="r n" style="left:537.2px;top:641.9px;width:55.8px;">34.6</div>
<div class="r n" style="left:-44.8px;top:657.7px;width:55.2px;">00</div>
<div class="r n" style="left:13.4px;top:657.7px;width:55.2px;">41,344.20</div>
<div class="r n" style="left:71.6px;top:657.7px;width:55.2px;">-29,964.75</div>
<div class="r n" style="left:129.8px;top:657.7px;width:55.2px;">90.32</div>
<div class="r n g" style="left:188.0px;top:657.7px;width:55.2px;">11,379.45</div>
<div class="r n g" style="left:246.2px;top:657.7px;width:55.2px;">0.00%</div>
<div class="r n" style="left:304.4px;top:657.7px;width:55.2px;">12.52</div>
<div class="r n" style="left:362.6px;top:657.7px;width:55.2px;">-0.11</div>
<div class="r n" style="left:420.8px;top:657.7px;width:55.2px;">145.86</div>
<div class="r n" style="left:479.0px;top:657.7px;width:55.2px;">-311.99</div>
<div class="r n" style="left:537.2px;top:657.7px;width:55.8px;">11.7</div>
<svg style="left:623px;top:644px" width="10" height="10"><rect x=".5" y=".5" width="9" height="9" fill="#fff" stroke="#a9b1c4"/><path d="M2.3 5l2 2.2 3.3-4.4" fill="none" stroke="#555" stroke-width="1"/></svg>
<svg style="left:623px;top:660px" width="10" height="10"><rect x=".5" y=".5" width="9" height="9" fill="#fff" stroke="#a9b1c4"/><path d="M2.3 5l2 2.2 3.3-4.4" fill="none" stroke="#555" stroke-width="1"/></svg>
<div style="left:674px;top:138.5px;width:406px;height:22px;border-bottom:1px solid #b4bdd0;"></div>
<div style="left:674px;top:138.5px;width:64.5px;height:22.5px;background:#d9dfec;border:1px solid #b4bdd0;border-bottom:none;border-left-color:#e2e7f1;"></div>
<div class="c" style="left:674px;top:142.2px;width:63.5px;">Risk Chart</div>
<div style="left:737.5px;top:138.5px;width:68.0px;height:22px;background:#ced5e5;border:1px solid #b4bdd0;"></div>
<div class="c" style="left:737.5px;top:142.2px;width:67.0px;">Price Chart</div>
<div style="left:804.5px;top:138.5px;width:106.5px;height:22px;background:#ced5e5;border:1px solid #b4bdd0;"></div>
<div class="c" style="left:804.5px;top:142.2px;width:105.5px;">Movement Analysis</div>
<div style="left:910px;top:138.5px;width:55px;height:22px;background:#ced5e5;border:1px solid #b4bdd0;"></div>
<div class="c" style="left:910px;top:142.2px;width:54px;">Volatility</div>
<div style="left:964px;top:138.5px;width:137px;height:22px;background:#ced5e5;border:1px solid #b4bdd0;"></div>
<div class="t" style="left:973.5px;top:142.2px;">Statistics &amp; Fundamentals</div>
<div style="left:674px;top:161px;width:406px;height:20.5px;background:#d9dfec;"></div>
<div class="t" style="left:678px;top:164.2px;letter-spacing:-.41px;">Vol Adjust</div>
<div style="left:727.5px;top:163px;width:44.5px;height:16.5px;background:#fff;border:1px solid #b9c1d3;"></div>
<div class="t n" style="left:749.5px;top:164.5px;">0</div>
<svg style="left:761.5px;top:166px" width="7" height="11"><path d="M0.5 4h5L3 0.8z M0.5 7h5L3 10.2z" fill="#444"/></svg>
<div class="t" style="left:986px;top:164.5px;">Projection</div>
<div style="left:1032.5px;top:164px;width:60px;height:16px;background:#fff;border:1px solid #b9c1d3;"></div>
<div class="t n" style="left:1035px;top:164.5px;">12/09/2024</div>
<div style="left:674px;top:181.5px;width:406px;height:470.5px;background:#fff;"></div>
<div style="left:672.5px;top:138px;width:1.5px;height:514px;background:#e4e9f2;"></div>
<svg style="left:0;top:0;letter-spacing:0" width="1080" height="675" viewBox="0 0 1080 675" font-family="Liberation Sans, sans-serif" font-size="8.9"><defs><clipPath id="pc"><rect x="721" y="198" width="360" height="274.4"/></clipPath></defs><path d="M717 198.2H1080 M717 216.5H1080 M717 234.7H1080 M717 253.0H1080 M717 271.3H1080 M717 289.5H1080 M717 307.8H1080 M717 326.1H1080 M717 344.3H1080 M717 362.6H1080 M717 380.9H1080 M717 399.1H1080 M717 417.4H1080 M717 435.7H1080 M717 453.9H1080 M717 472.2H1080 M730.3 198V475 M768.5 198V475 M806.6 198V475 M844.8 198V475 M883.0 198V475 M921.2 198V475 M959.3 198V475 M997.5 198V475 M1035.7 198V475 M1073.9 198V475" stroke="#e9e9e9" stroke-width="1" fill="none"/><path d="M721 198V472.2" stroke="#d8d8d8" stroke-width="1" fill="none"/><rect x="854.5" y="198" width="139.7" height="274.2" fill="#92cddc"/><rect x="889.4" y="198" width="69.8" height="274.2" fill="#4f81bd"/><path d="M854.5 216.5H994.2 M854.5 234.7H994.2 M854.5 253.0H994.2 M854.5 271.3H994.2 M854.5 289.5H994.2 M854.5 307.8H994.2 M854.5 326.1H994.2 M854.5 344.3H994.2 M854.5 362.6H994.2 M854.5 380.9H994.2 M854.5 399.1H994.2 M854.5 417.4H994.2 M854.5 435.7H994.2 M854.5 453.9H994.2 M883.0 198V472.2 M921.2 198V472.2 M959.3 198V472.2" stroke="#e6e6e6" stroke-opacity=".78" stroke-width="1" fill="none"/><text transform="translate(863.8 200.5) rotate(-90)" text-anchor="end" fill="#4f81bd" font-size="8.9">5462.65</text><text transform="translate(899.0 200.5) rotate(-90)" text-anchor="end" fill="#b4d3ea" font-size="8.9">5508.39</text><text transform="translate(958.5 200.5) rotate(-90)" text-anchor="end" fill="#b4d3ea" font-size="8.9">5599.87</text><text transform="translate(993.0 200.5) rotate(-90)" text-anchor="end" fill="#4f81bd" font-size="8.9">5645.61</text><g clip-path="url(#pc)" fill="none"><path d="M712.0 302.0 C713.5 300.9 715.8 299.1 721.3 295.4 C726.8 291.6 736.9 284.1 745.0 279.5 C753.1 274.9 760.5 271.0 770.0 267.5 C779.5 264.0 793.1 261.0 802.2 258.7 C811.3 256.4 817.0 255.1 824.4 253.8 C831.8 252.5 840.0 251.5 846.7 250.8 C853.4 250.1 858.9 249.8 864.4 249.5 C869.9 249.2 874.4 249.0 880.0 248.9 C885.6 248.8 890.9 249.0 897.8 249.2 C904.7 249.4 913.9 249.7 921.3 250.2 C928.7 250.7 933.1 251.3 942.2 252.0 C951.3 252.7 964.9 253.3 976.0 254.2 C987.1 255.1 998.5 256.1 1008.9 257.2 C1019.3 258.2 1025.8 259.1 1038.5 260.5 C1051.2 261.9 1077.2 264.8 1085.0 265.6" stroke="#f06868" stroke-width="1.0"/><path d="M712.0 412.0 C714.7 408.3 721.8 398.5 728.1 390.0 C734.4 381.5 742.8 370.1 749.6 361.1 C756.4 352.1 762.7 343.3 768.9 335.9 C775.1 328.5 780.4 323.1 786.7 316.7 C793.0 310.3 802.0 301.8 806.7 297.4 C811.4 292.9 811.8 292.5 814.8 290.0 C817.8 287.5 820.3 285.4 824.4 282.5 C828.5 279.6 834.4 275.5 839.3 272.5 C844.2 269.5 849.8 266.8 854.0 264.6 C858.2 262.4 860.1 261.5 864.4 259.4 C868.7 257.3 875.9 253.8 880.0 252.0 C884.1 250.2 884.4 250.2 888.9 248.9 C893.4 247.6 901.3 245.4 906.7 244.0 C912.1 242.6 915.4 241.7 921.3 240.7 C927.2 239.7 935.0 238.7 942.2 238.0 C949.4 237.3 957.0 236.8 964.4 236.5 C971.8 236.2 979.3 236.2 986.7 236.5 C994.1 236.8 1000.3 237.4 1008.9 238.0 C1017.5 238.6 1028.7 239.5 1038.5 240.2 C1048.3 240.9 1060.2 241.5 1068.0 242.1 C1075.8 242.7 1082.2 243.3 1085.0 243.5" stroke="#f06868" stroke-width="1.0"/><path d="M712.0 346.0 C713.6 345.0 715.2 344.0 721.5 340.1 C727.8 336.2 740.0 328.2 749.6 322.6 C759.2 317.0 771.4 310.5 779.3 306.3 C787.2 302.1 791.6 300.1 797.0 297.4 C802.4 294.7 807.3 292.2 811.9 290.0 C816.5 287.8 817.4 286.8 824.4 284.2 C831.4 281.6 844.7 276.8 854.0 274.5 C863.3 272.2 872.7 271.3 880.0 270.2 C887.3 269.1 891.9 268.4 897.8 267.6 C903.7 266.8 909.7 266.2 915.6 265.6 C921.5 265.0 927.2 264.6 933.1 264.2 C939.0 263.8 944.0 263.6 951.1 263.3 C958.2 263.1 968.9 262.9 976.0 262.7 C983.1 262.5 986.0 262.4 994.0 262.4 C1002.0 262.4 1013.8 262.6 1023.7 262.9 C1033.6 263.1 1043.1 263.5 1053.3 263.9 C1063.5 264.3 1079.7 265.0 1085.0 265.2" stroke="#42e042" stroke-width="1.05"/><path d="M712.0 446.0 C713.5 444.1 713.6 443.6 720.9 434.3 C728.2 425.0 745.9 401.7 755.6 390.0 C765.3 378.3 770.8 372.9 779.3 364.1 C787.8 355.3 799.3 344.2 806.7 337.4 C814.1 330.6 817.2 328.4 823.7 323.3 C830.2 318.2 838.0 312.5 845.9 307.0 C853.8 301.5 865.4 294.0 871.1 290.5 C876.8 287.0 877.0 287.3 880.0 285.8 C883.0 284.3 885.9 282.7 888.9 281.3 C891.9 279.9 894.8 278.6 897.8 277.3 C900.8 276.1 903.7 275.0 906.7 273.8 C909.7 272.6 912.7 271.3 915.6 270.2 C918.5 269.1 921.5 268.1 924.4 267.1 C927.3 266.1 930.1 265.2 933.1 264.2 C936.1 263.2 939.2 262.1 942.2 261.3 C945.2 260.5 948.1 259.8 951.1 259.1 C954.1 258.4 955.9 257.8 960.0 256.9 C964.1 256.0 970.3 254.8 976.0 253.8 C981.7 252.8 986.0 252.0 994.0 251.0 C1002.0 250.0 1013.8 248.8 1023.7 248.0 C1033.6 247.2 1043.1 246.6 1053.3 246.1 C1063.5 245.6 1079.7 245.2 1085.0 245.0" stroke="#42e042" stroke-width="1.05"/><path d="M712.0 220.4 L1085.0 265.4" stroke="#3a3ac4" stroke-width="1.6"/><path d="M712.0 380.3 L789.0 206.6 L1085.0 243.3" stroke="#0a7f0a" stroke-width="1.7"/></g><path d="M910.9 262 L936 260 L936 266.7 L910.9 268.6Z" fill="#c9a394" fill-opacity=".85"/><circle cx="933" cy="264.2" r="3" fill="#12e6ee" stroke="#123" stroke-width="1.1"/><text x="715.4" y="201.5" text-anchor="end" fill="#333">50%</text><text x="715.4" y="219.8" text-anchor="end" fill="#333">47%</text><text x="715.4" y="238.0" text-anchor="end" fill="#333">43%</text><text x="715.4" y="256.3" text-anchor="end" fill="#333">40%</text><text x="715.4" y="274.6" text-anchor="end" fill="#333">37%</text><text x="715.4" y="292.8" text-anchor="end" fill="#333">33%</text><text x="715.4" y="311.1" text-anchor="end" fill="#333">30%</text><text x="715.4" y="329.4" text-anchor="end" fill="#333">27%</text><text x="715.4" y="348.5" text-anchor="end" fill="#333">23%</text><text x="715.4" y="366.8" text-anchor="end" fill="#333">20%</text><text x="715.4" y="384.2" text-anchor="end" fill="#333">17%</text><text x="715.4" y="402.4" text-anchor="end" fill="#333">13%</text><text x="715.4" y="420.7" text-anchor="end" fill="#333">10%</text><text x="715.4" y="439.0" text-anchor="end" fill="#333">7%</text><text x="715.4" y="457.2" text-anchor="end" fill="#333">3%</text><text x="715.4" y="475.5" text-anchor="end" fill="#333">0%</text><text x="730.9" y="485" text-anchor="middle" fill="#333" letter-spacing="-0.25">5300</text><text x="769.1" y="485" text-anchor="middle" fill="#333" letter-spacing="-0.25">5350</text><text x="807.2" y="485" text-anchor="middle" fill="#333" letter-spacing="-0.25">5400</text><text x="845.4" y="485" text-anchor="middle" fill="#333" letter-spacing="-0.25">5450</text><text x="883.6" y="485" text-anchor="middle" fill="#333" letter-spacing="-0.25">5500</text><text x="959.9" y="485" text-anchor="middle" fill="#333" letter-spacing="-0.25">5600</text><text x="998.1" y="485" text-anchor="middle" fill="#333" letter-spacing="-0.25">5650</text><text x="1036.3" y="485" text-anchor="middle" fill="#333" letter-spacing="-0.25">5700</text><text x="1074.5" y="485" text-anchor="middle" fill="#333" letter-spacing="-0.25">5750</text><text x="730.3" y="191.9" text-anchor="middle" fill="#333">-4.6%</text><text x="768.5" y="191.9" text-anchor="middle" fill="#333">-3.7%</text><text x="806.6" y="191.9" text-anchor="middle" fill="#333">-2.8%</text><text x="844.8" y="191.9" text-anchor="middle" fill="#333">-1.9%</text><text x="883.0" y="191.9" text-anchor="middle" fill="#333">-1.0%</text><text x="959.3" y="191.9" text-anchor="middle" fill="#333">0.8%</text><text x="997.5" y="191.9" text-anchor="middle" fill="#333">1.7%</text><text x="1035.7" y="191.9" text-anchor="middle" fill="#333">2.6%</text><text x="1073.9" y="191.9" text-anchor="middle" fill="#333">3.5%</text><text x="909" y="191.9" fill="#333">-0.</text><rect x="921" y="182.6" width="24.5" height="10.5" fill="#f4f6fb" stroke="#7d8698" stroke-width="1"/><text x="933.3" y="191.2" text-anchor="middle" fill="#333">0.2%</text><rect x="679.2" y="258" width="38.4" height="10.6" fill="#008000"/><text x="715.2" y="267.2" text-anchor="end" fill="#fff">38%</text><rect x="725.5" y="202.5" width="138.8" height="93" rx="4" fill="#eaf0fa" fill-opacity=".82" stroke="#7f8b9d" stroke-width="1"/><rect x="732.4" y="209.2" width="2.6" height="10.6" fill="#a8e8a0"/><text x="734.9" y="218.0" fill="#444">12,258.20 Realized PnL</text><rect x="732.4" y="220.8" width="2.6" height="10.6" fill="#52c052"/><text x="734.9" y="229.6" fill="#444">+1 <tspan fill="#5a5ae8">30sep. 5225 Put Δ</tspan></text><text x="857" y="229.6" text-anchor="end" fill="#5a5ae8">-7.59</text><rect x="732.4" y="232.4" width="2.6" height="10.6" fill="#52c052"/><text x="734.9" y="241.2" fill="#444">-1 <tspan fill="#ee5a5a">30sep. 5375 Put Δ</tspan></text><text x="853" y="241.2" text-anchor="end" fill="#ee5a5a">-17.35</text><rect x="732.4" y="244.0" width="2.6" height="10.6" fill="#8aa8ec"/><text x="734.9" y="252.8" fill="#444">-5 <tspan fill="#ee5a5a">SPX Stock</tspan></text><rect x="732.4" y="255.6" width="2.6" height="10.6" fill="#8aa8ec"/><text x="734.9" y="264.4" fill="#444">+1 <tspan fill="#5a5ae8">30sep. 5990 Call Δ</tspan></text><text x="857" y="264.4" text-anchor="end" fill="#5a5ae8">0.76</text><rect x="732.4" y="267.2" width="2.6" height="10.6" fill="#8aa8ec"/><text x="734.9" y="276.0" fill="#444">-1 <tspan fill="#ee5a5a">30sep. 6030 Call Δ</tspan></text><text x="853" y="276.0" text-anchor="end" fill="#ee5a5a">0.60</text><rect x="732.4" y="278.8" width="2.6" height="10.6" fill="#8aa8ec"/><text x="734.9" y="287.6" fill="#444">-1 <tspan fill="#ee5a5a">30sep. 5225 Put Δ</tspan></text><text x="853" y="287.6" text-anchor="end" fill="#ee5a5a">-7.59</text><rect x="725.4" y="421.2" width="92" height="47" rx="4" fill="#eaf0fa" fill-opacity=".85" stroke="#8d99ab" stroke-width="1"/><text x="732" y="437.0" fill="#62b062" letter-spacing="-0.13">30/09/2024 (0)</text><text x="732" y="448.8" fill="#f27878" letter-spacing="-0.13">21/09/2024 (9) T+9</text><text x="732" y="460.6" fill="#7fe07f" letter-spacing="-0.13">12/09/2024 (18) T+0</text><rect x="677" y="490.8" width="410" height="158" rx="3" fill="#e9eff8" stroke="#9aa6ba" stroke-width="1"/><rect x="721.7" y="512.1" width="28.8" height="2.7" fill="#5070f0" stroke="#4a5278" stroke-width=".8"/><rect x="750.5" y="510.5" width="38.1" height="4.3" fill="#5070f0" stroke="#4a5278" stroke-width=".8"/><rect x="788.6" y="508.4" width="38.1" height="6.4" fill="#5070f0" stroke="#4a5278" stroke-width=".8"/><rect x="826.7" y="507.8" width="38.1" height="7.0" fill="#5070f0" stroke="#4a5278" stroke-width=".8"/><rect x="864.9" y="506.6" width="38.1" height="8.2" fill="#5070f0" stroke="#4a5278" stroke-width=".8"/><rect x="903.0" y="506.6" width="38.1" height="8.2" fill="#5070f0" stroke="#4a5278" stroke-width=".8"/><rect x="941.1" y="506.0" width="38.1" height="8.8" fill="#5070f0" stroke="#4a5278" stroke-width=".8"/><rect x="979.2" y="506.0" width="38.1" height="8.8" fill="#5070f0" stroke="#4a5278" stroke-width=".8"/><rect x="1017.3" y="505.1" width="38.1" height="9.7" fill="#5070f0" stroke="#4a5278" stroke-width=".8"/><rect x="1055.5" y="505.4" width="39.5" height="9.4" fill="#5070f0" stroke="#4a5278" stroke-width=".8"/><rect x="721.7" y="541.4" width="28.8" height="9.2" fill="#5070f0" stroke="#4a5278" stroke-width=".8"/><rect x="750.5" y="543.0" width="38.1" height="7.6" fill="#5070f0" stroke="#4a5278" stroke-width=".8"/><rect x="788.6" y="544.5" width="38.1" height="6.1" fill="#5070f0" stroke="#4a5278" stroke-width=".8"/><rect x="826.7" y="546.0" width="38.1" height="4.6" fill="#5070f0" stroke="#4a5278" stroke-width=".8"/><rect x="864.9" y="547.4" width="38.1" height="3.2" fill="#5070f0" stroke="#4a5278" stroke-width=".8"/><rect x="903.0" y="548.3" width="38.1" height="2.3" fill="#5070f0" stroke="#4a5278" stroke-width=".8"/><rect x="941.1" y="549.1" width="38.1" height="1.5" fill="#5070f0" stroke="#4a5278" stroke-width=".8"/><rect x="979.2" y="549.7" width="38.1" height="0.9" fill="#5070f0" stroke="#4a5278" stroke-width=".8"/><rect x="1017.3" y="550.1" width="38.1" height="0.5" fill="#5070f0" stroke="#4a5278" stroke-width=".8"/><rect x="1055.5" y="550.3" width="39.5" height="0.3" fill="#5070f0" stroke="#4a5278" stroke-width=".8"/><rect x="721.7" y="578.4" width="28.8" height="8.6" fill="#f07078" stroke="#7a5a5e" stroke-width=".8"/><rect x="750.5" y="578.4" width="38.1" height="8.6" fill="#f07078" stroke="#7a5a5e" stroke-width=".8"/><rect x="788.6" y="578.4" width="38.1" height="8.6" fill="#f07078" stroke="#7a5a5e" stroke-width=".8"/><rect x="826.7" y="578.4" width="38.1" height="7.2" fill="#f07078" stroke="#7a5a5e" stroke-width=".8"/><rect x="864.9" y="578.4" width="38.1" height="6.0" fill="#f07078" stroke="#7a5a5e" stroke-width=".8"/><rect x="903.0" y="578.4" width="38.1" height="4.3" fill="#f07078" stroke="#7a5a5e" stroke-width=".8"/><rect x="941.1" y="578.4" width="38.1" height="3.4" fill="#f07078" stroke="#7a5a5e" stroke-width=".8"/><rect x="979.2" y="578.4" width="38.1" height="2.0" fill="#f07078" stroke="#7a5a5e" stroke-width=".8"/><rect x="1017.3" y="578.4" width="38.1" height="1.2" fill="#f07078" stroke="#7a5a5e" stroke-width=".8"/><rect x="1055.5" y="578.4" width="39.5" height="0.6" fill="#f07078" stroke="#7a5a5e" stroke-width=".8"/><rect x="721.7" y="597.8" width="28.8" height="7.6" fill="#5070f0" stroke="#4a5278" stroke-width=".8"/><rect x="750.5" y="597.0" width="38.1" height="8.4" fill="#5070f0" stroke="#4a5278" stroke-width=".8"/><rect x="788.6" y="596.2" width="38.1" height="9.2" fill="#5070f0" stroke="#4a5278" stroke-width=".8"/><rect x="826.7" y="597.1" width="38.1" height="8.3" fill="#5070f0" stroke="#4a5278" stroke-width=".8"/><rect x="864.9" y="598.0" width="38.1" height="7.4" fill="#5070f0" stroke="#4a5278" stroke-width=".8"/><rect x="903.0" y="599.1" width="38.1" height="6.3" fill="#5070f0" stroke="#4a5278" stroke-width=".8"/><rect x="941.1" y="600.2" width="38.1" height="5.2" fill="#5070f0" stroke="#4a5278" stroke-width=".8"/><rect x="979.2" y="601.5" width="38.1" height="3.9" fill="#5070f0" stroke="#4a5278" stroke-width=".8"/><rect x="1017.3" y="602.7" width="38.1" height="2.7" fill="#5070f0" stroke="#4a5278" stroke-width=".8"/><rect x="1055.5" y="603.7" width="39.5" height="1.7" fill="#5070f0" stroke="#4a5278" stroke-width=".8"/><rect x="721.7" y="633.4" width="28.8" height="6.8" fill="#f07078" stroke="#7a5a5e" stroke-width=".8"/><rect x="750.5" y="633.4" width="38.1" height="8.2" fill="#f07078" stroke="#7a5a5e" stroke-width=".8"/><rect x="788.6" y="633.4" width="38.1" height="8.2" fill="#f07078" stroke="#7a5a5e" stroke-width=".8"/><rect x="826.7" y="633.4" width="38.1" height="7.4" fill="#f07078" stroke="#7a5a5e" stroke-width=".8"/><rect x="864.9" y="633.4" width="38.1" height="6.2" fill="#f07078" stroke="#7a5a5e" stroke-width=".8"/><rect x="903.0" y="633.4" width="38.1" height="5.2" fill="#f07078" stroke="#7a5a5e" stroke-width=".8"/><rect x="941.1" y="633.4" width="38.1" height="4.1" fill="#f07078" stroke="#7a5a5e" stroke-width=".8"/><rect x="979.2" y="633.4" width="38.1" height="3.0" fill="#f07078" stroke="#7a5a5e" stroke-width=".8"/><rect x="1017.3" y="633.4" width="38.1" height="2.0" fill="#f07078" stroke="#7a5a5e" stroke-width=".8"/><rect x="1055.5" y="633.4" width="39.5" height="1.1" fill="#f07078" stroke="#7a5a5e" stroke-width=".8"/><text x="699.5" y="518" text-anchor="middle" fill="#555" font-size="9.2">PnL</text><text x="699.5" y="554.8" text-anchor="middle" fill="#555" font-size="9.2">Delta</text><text x="699.5" y="582.2" text-anchor="middle" fill="#555" font-size="9.2">Gamma</text><text x="699.5" y="609.2" text-anchor="middle" fill="#555" font-size="9.2">Theta</text><text x="699.5" y="637.2" text-anchor="middle" fill="#555" font-size="9.2">Vega</text><text text-anchor="middle" letter-spacing="-0.22" fill="#6c6cf0"><tspan x="730.9" y="522.8">2784</tspan><tspan x="730.9" y="530.8">9%</tspan><tspan x="730.9" y="558.8">55.47</tspan><tspan x="730.9" y="614">184.47</tspan></text><text text-anchor="middle" letter-spacing="-0.22" fill="#ec6464"><tspan x="730.9" y="577.6">-0.18</tspan><tspan x="730.9" y="632.6">-453.12</tspan></text><text text-anchor="middle" letter-spacing="-0.22" fill="#6c6cf0"><tspan x="769.1" y="522.8">5331</tspan><tspan x="769.1" y="530.8">18%</tspan><tspan x="769.1" y="558.8">46.35</tspan><tspan x="769.1" y="614">201.48</tspan></text><text text-anchor="middle" letter-spacing="-0.22" fill="#ec6464"><tspan x="769.1" y="577.6">-0.18</tspan><tspan x="769.1" y="632.6">-473.52</tspan></text><text text-anchor="middle" letter-spacing="-0.22" fill="#6c6cf0"><tspan x="807.2" y="522.8">7420</tspan><tspan x="807.2" y="530.8">25%</tspan><tspan x="807.2" y="558.8">37.25</tspan><tspan x="807.2" y="614">205.95</tspan></text><text text-anchor="middle" letter-spacing="-0.22" fill="#ec6464"><tspan x="807.2" y="577.6">-0.18</tspan><tspan x="807.2" y="632.6">-469.07</tspan></text><text text-anchor="middle" letter-spacing="-0.22" fill="#6c6cf0"><tspan x="845.4" y="522.8">9064</tspan><tspan x="845.4" y="530.8">30%</tspan><tspan x="845.4" y="558.8">28.63</tspan><tspan x="845.4" y="614">198.16</tspan></text><text text-anchor="middle" letter-spacing="-0.22" fill="#ec6464"><tspan x="845.4" y="577.6">-0.16</tspan><tspan x="845.4" y="632.6">-440.92</tspan></text><text text-anchor="middle" letter-spacing="-0.22" fill="#6c6cf0"><tspan x="883.6" y="522.8">10298</tspan><tspan x="883.6" y="530.8">34%</tspan><tspan x="883.6" y="558.8">20.89</tspan><tspan x="883.6" y="614">180.06</tspan></text><text text-anchor="middle" letter-spacing="-0.22" fill="#ec6464"><tspan x="883.6" y="577.6">-0.14</tspan><tspan x="883.6" y="632.6">-393.37</tspan></text><text text-anchor="middle" letter-spacing="-0.22" fill="#6c6cf0"><tspan x="921.8" y="522.8">11200</tspan><tspan x="921.8" y="530.8">37%</tspan><tspan x="921.8" y="558.8">14.30</tspan><tspan x="921.8" y="614">154.66</tspan></text><text text-anchor="middle" letter-spacing="-0.22" fill="#ec6464"><tspan x="921.8" y="577.6">-0.12</tspan><tspan x="921.8" y="632.6">-332.40</tspan></text><text text-anchor="middle" letter-spacing="-0.22" fill="#6c6cf0"><tspan x="959.9" y="522.8">11750</tspan><tspan x="959.9" y="530.8">39%</tspan><tspan x="959.9" y="558.8">9.03</tspan><tspan x="959.9" y="614">125.28</tspan></text><text text-anchor="middle" letter-spacing="-0.22" fill="#ec6464"><tspan x="959.9" y="577.6">-0.09</tspan><tspan x="959.9" y="632.6">-264.68</tspan></text><text text-anchor="middle" letter-spacing="-0.22" fill="#6c6cf0"><tspan x="998.1" y="522.8">12098</tspan><tspan x="998.1" y="530.8">40%</tspan><tspan x="998.1" y="558.8">5.13</tspan><tspan x="998.1" y="614">94.94</tspan></text><text text-anchor="middle" letter-spacing="-0.22" fill="#ec6464"><tspan x="998.1" y="577.6">-0.06</tspan><tspan x="998.1" y="632.6">-195.57</tspan></text><text text-anchor="middle" letter-spacing="-0.22" fill="#6c6cf0"><tspan x="1036.3" y="522.8">12286</tspan><tspan x="1036.3" y="530.8">41%</tspan><tspan x="1036.3" y="558.8">2.59</tspan><tspan x="1036.3" y="614">66.09</tspan></text><text text-anchor="middle" letter-spacing="-0.22" fill="#ec6464"><tspan x="1036.3" y="577.6">-0.04</tspan><tspan x="1036.3" y="632.6">-129.86</tspan></text><text text-anchor="middle" letter-spacing="-0.22" fill="#6c6cf0"><tspan x="1074.5" y="522.8">12370</tspan><tspan x="1074.5" y="530.8">41%</tspan><tspan x="1074.5" y="558.8">1.29</tspan><tspan x="1074.5" y="614">40.71</tspan></text><text text-anchor="middle" letter-spacing="-0.22" fill="#ec6464"><tspan x="1074.5" y="577.6">-0.02</tspan><tspan x="1074.5" y="632.6">-71.80</tspan></text><rect x="911.5" y="476.8" width="42.4" height="171" rx="3" fill="#e9eff8" fill-opacity=".86" stroke="#8d99ab" stroke-width="1"/><text x="933.2" y="486.2" text-anchor="middle" fill="#111">5565.45</text><text x="933.2" y="513.8" text-anchor="middle" fill="#2a2af0">11,379</text><text x="933.2" y="527.2" text-anchor="middle" fill="#2a2af0">37.9%</text><text x="933.2" y="553.8" text-anchor="middle" fill="#2a2af0">12.52</text><text x="933.2" y="581.9" text-anchor="middle" fill="#f02020">-0.11</text><text x="933.2" y="609.3" text-anchor="middle" fill="#2a2af0">145.86</text><text x="933.2" y="636.9" text-anchor="middle" fill="#f02020">-311.99</text></svg>
<div style="left:673.5px;top:651.5px;width:407px;height:21px;background:#293755;"></div>
<div style="left:670px;top:672.5px;width:410px;height:2.5px;background:#a9adb6;"></div>
<div class="t" style="left:1040px;top:655.5px;color:#fff;">300%</div>
<div class="t" style="left:1075.5px;top:655.5px;color:#fff;">–</div>
</body></html>
